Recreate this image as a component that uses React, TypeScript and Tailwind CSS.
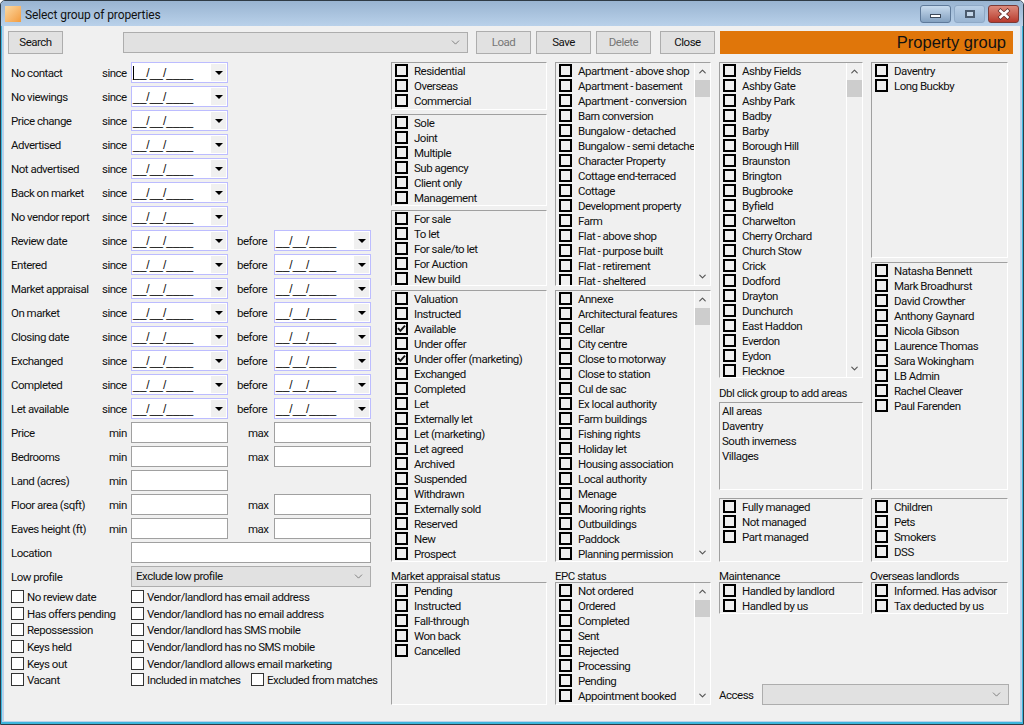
import { ReactNode } from 'react';
import { ChevronDown, ChevronUp } from 'lucide-react';

const dateRows = [
  { label: 'No contact', caret: true },
  { label: 'No viewings' },
  { label: 'Price change' },
  { label: 'Advertised' },
  { label: 'Not advertised' },
  { label: 'Back on market' },
  { label: 'No vendor report' },
  { label: 'Review date', before: true },
  { label: 'Entered', before: true },
  { label: 'Market appraisal', before: true },
  { label: 'On market', before: true },
  { label: 'Closing date', before: true },
  { label: 'Exchanged', before: true },
  { label: 'Completed', before: true },
  { label: 'Let available', before: true },
];

const rangeRows = [
  { label: 'Price', max: true },
  { label: 'Bedrooms', max: true },
  { label: 'Land (acres)', max: false },
  { label: 'Floor area (sqft)', max: true },
  { label: 'Eaves height (ft)', max: true },
];

const flagRows = [
  { h: 'h-[17px]', left: 'No review date', right: 'Vendor/landlord has email address' },
  { h: 'h-[16px]', left: 'Has offers pending', right: 'Vendor/landlord has no email address' },
  { h: 'h-[17px]', left: 'Repossession', right: 'Vendor/landlord has SMS mobile' },
  { h: 'h-[17px]', left: 'Keys held', right: 'Vendor/landlord has no SMS mobile' },
  { h: 'h-[16px]', left: 'Keys out', right: 'Vendor/landlord allows email marketing' },
  { h: 'h-[17px]', left: 'Vacant', right: 'Included in matches', extra: 'Excluded from matches' },
];

const statusList = ['Valuation', 'Instructed', 'Available', 'Under offer', 'Under offer (marketing)', 'Exchanged', 'Completed', 'Let', 'Externally let', 'Let (marketing)', 'Let agreed', 'Archived', 'Suspended', 'Withdrawn', 'Externally sold', 'Reserved', 'New', 'Prospect'];
const typeList = ['Apartment - above shop', 'Apartment - basement', 'Apartment - conversion', 'Barn conversion', 'Bungalow - detached', 'Bungalow - semi detached', 'Character Property', 'Cottage end-terraced', 'Cottage', 'Development property', 'Farm', 'Flat - above shop', 'Flat - purpose built', 'Flat - retirement', 'Flat - sheltered'];
const featureList = ['Annexe', 'Architectural features', 'Cellar', 'City centre', 'Close to motorway', 'Close to station', 'Cul de sac', 'Ex local authority', 'Farm buildings', 'Fishing rights', 'Holiday let', 'Housing association', 'Local authority', 'Menage', 'Mooring rights', 'Outbuildings', 'Paddock', 'Planning permission'];
const epcList = ['Not ordered', 'Ordered', 'Completed', 'Sent', 'Rejected', 'Processing', 'Pending', 'Appointment booked', ''];
const areaList = ['Ashby Fields', 'Ashby Gate', 'Ashby Park', 'Badby', 'Barby', 'Borough Hill', 'Braunston', 'Brington', 'Bugbrooke', 'Byfield', 'Charwelton', 'Cherry Orchard', 'Church Stow', 'Crick', 'Dodford', 'Drayton', 'Dunchurch', 'East Haddon', 'Everdon', 'Eydon', 'Flecknoe'];
const staffList = ['Natasha Bennett', 'Mark Broadhurst', 'David Crowther', 'Anthony Gaynard', 'Nicola Gibson', 'Laurence Thomas', 'Sara Wokingham', 'LB Admin', 'Rachel Cleaver', 'Paul Farenden'];

function Arrow() {
  return <span className="h-0 w-0 border-x-[4px] border-t-[4px] border-x-transparent border-t-black" />;
}

function DateField({ caret }: { caret?: boolean }) {
  return (
    <div className="flex h-[21px] w-[97px] items-center justify-between border border-[#bcbcff] bg-white px-[1px]">
      <span className="flex items-center font-['Liberation_Sans',sans-serif] text-[12px] leading-none tracking-normal text-[#111]">
        {caret && <span className="-mr-[1px] h-[14px] w-[1px] bg-black" />}
        __/__/____
      </span>
      <span className="flex h-[17px] w-[15px] items-center justify-center bg-[#f0f0f0]">
        <Arrow />
      </span>
    </div>
  );
}

function TextBox({ wide }: { wide?: boolean }) {
  return <div className={`h-[21px] border border-[#a0a0a0] bg-white ${wide ? 'w-[240px]' : 'w-[97px]'}`} />;
}

function Combo({ value, className }: { value?: string; className: string }) {
  return (
    <div className={`flex shrink-0 items-center justify-between border border-[#adadad] bg-[#e1e1e1] pl-1 pr-[5px] ${className}`}>
      <span className="mt-[1px]">{value}</span>
      <ChevronDown size={13} strokeWidth={1.25} className="text-[#555]" />
    </div>
  );
}

function Button({ children, disabled, className }: { children: ReactNode; disabled?: boolean; className: string }) {
  return (
    <div className={`flex h-[23px] w-[55px] items-center justify-center border border-[#adadad] bg-[#e1e1e1] ${disabled ? 'text-[#777]' : ''} ${className}`}>
      {children}
    </div>
  );
}

function Tick({ label, checked }: { label: string; checked?: boolean }) {
  return (
    <div className="flex h-[15px] items-center whitespace-nowrap">
      <span className="mr-[6px] flex h-[13px] w-[13px] shrink-0 items-center justify-center border-2 border-black bg-[#f0f0f0]">
        {checked && (
          <svg width="9" height="9" viewBox="0 0 9 9" fill="none">
            <path d="M1 4.2 L3.4 6.8 L8 1.6" stroke="#111" strokeWidth="1.9" />
          </svg>
        )}
      </span>
      <span className="mt-[2px] leading-none">{label}</span>
    </div>
  );
}

function ThinTick({ label, className }: { label: string; className?: string }) {
  return (
    <div className={`flex items-center whitespace-nowrap ${className ?? ''}`}>
      <span className="mr-[3px] h-[13px] w-[13px] shrink-0 border border-[#333] bg-white" />
      <span className="mt-[2px] leading-none">{label}</span>
    </div>
  );
}

function Scrollbar() {
  return (
    <div className="flex w-[16px] shrink-0 flex-col items-center border-l border-white">
      <div className="flex h-[17px] items-center justify-center">
        <ChevronUp size={11} strokeWidth={2.5} className="text-[#555]" />
      </div>
      <div className="h-[17px] w-full bg-[#cdcdcd]" />
      <div className="flex-1" />
      <div className="flex h-[17px] items-center justify-center">
        <ChevronDown size={11} strokeWidth={2.5} className="text-[#555]" />
      </div>
    </div>
  );
}

function Box({ className, children, scroll }: { className: string; children: ReactNode; scroll?: boolean }) {
  return (
    <div className={`flex overflow-hidden border border-b-white border-l-[#a0a0a0] border-r-white border-t-[#a0a0a0] ${className}`}>
      <div className="min-w-0 flex-1 overflow-hidden pl-[3px]">{children}</div>
      {scroll && <Scrollbar />}
    </div>
  );
}

function Ticks({ items, checked = [] }: { items: string[]; checked?: string[] }) {
  return (
    <>
      {items.map((item) => (
        <Tick key={item} label={item} checked={checked.includes(item)} />
      ))}
    </>
  );
}

function Caption({ children, className }: { children: ReactNode; className?: string }) {
  return <div className={`flex items-end whitespace-nowrap leading-none ${className ?? 'h-[20px]'}`}>{children}</div>;
}

export default function App() {
  return (
    <div className="flex h-[725px] w-[1024px] flex-col overflow-hidden rounded-t-[5px] border border-[#2f3b45] bg-[#b9d1ea] font-['Roboto',sans-serif] text-[11.5px] tracking-[-0.5px] text-[#111]">
      {/* title bar */}
      <div className="flex h-[25px] shrink-0 items-center bg-gradient-to-b from-[#99b4d1] to-[#b9d1ea] pl-[4px] pr-[4px]">
        <div className="mr-[4px] mt-[1px] h-[16px] w-[16px] bg-gradient-to-br from-[#fbd9a0] to-[#f29b3a]" />
        <span className="mt-[2px] text-[12px] tracking-[-0.1px]">Select group of properties</span>
        <div className="ml-auto flex gap-[3px] self-start pt-[4px]">
          <div className="flex h-[18px] w-[31px] items-center justify-center rounded-[3px] border border-[#5f7a9a] bg-gradient-to-b from-[#c8dbee] to-[#84a1c0]">
            <span className="mt-[3px] h-[4px] w-[11px] border border-[#3d4a5a] bg-white" />
          </div>
          <div className="flex h-[18px] w-[31px] items-center justify-center rounded-[3px] border border-[#8fa9c6] bg-gradient-to-b from-[#b9cfe6] to-[#9ab5d2]">
            <span className="h-[8px] w-[10px] border-2 border-[#4b5a6c] bg-[#c4d6e8]" />
          </div>
          <div className="flex h-[18px] w-[31px] items-center justify-center rounded-[3px] border border-[#7c3a36] bg-gradient-to-b from-[#dc8a7c] to-[#b8392c]">
            <svg width="16" height="12" viewBox="0 0 16 12" fill="none">
              <path d="M3 1.5 L13 10.5 M13 1.5 L3 10.5" stroke="#5a2a28" strokeWidth="4" />
              <path d="M3.5 2 L12.5 10 M12.5 2 L3.5 10" stroke="#fff" strokeWidth="2.6" />
            </svg>
          </div>
        </div>
      </div>

      {/* frame round the client area */}
      <div className="flex min-h-0 flex-1 flex-col border-x border-b-2 border-[#3cb6dd] px-[2px] pb-[1px]">
        <div className="min-h-0 flex-1 overflow-hidden bg-[#f0f0f0] pl-[4px]">
          {/* toolbar */}
          <div className="flex h-[28px] items-end">
            <Button className="mr-[60px]">Search</Button>
            <Combo className="mb-[1px] mr-[8px] h-[21px] w-[345px]" />
            <Button disabled className="mr-[5px]">Load</Button>
            <Button className="mr-[5px]">Save</Button>
            <Button disabled className="mr-[9px]">Delete</Button>
            <Button className="mr-[5px]">Close</Button>
            <div className="flex h-[23px] w-[293px] items-center justify-end bg-[#e0760a] pr-[7px] font-['Liberation_Sans',sans-serif] text-[16.5px] leading-none tracking-normal">Property group</div>
          </div>

          <div className="mt-[8px] flex">
            {/* filter form */}
            <div className="ml-[3px] w-[380px] shrink-0">
              {dateRows.map((row) => (
                <div key={row.label} className="flex h-[24px] items-start">
                  <span className="mt-[6px] w-[91px] leading-none">{row.label}</span>
                  <span className="mt-[6px] w-[29px] leading-none">since</span>
                  <DateField caret={row.caret} />
                  {row.before && (
                    <>
                      <span className="ml-[9px] mt-[6px] w-[37px] leading-none">before</span>
                      <DateField />
                    </>
                  )}
                </div>
              ))}
              {rangeRows.map((row) => (
                <div key={row.label} className="flex h-[24px] items-start">
                  <span className="mt-[6px] w-[98px] leading-none">{row.label}</span>
                  <span className="mt-[6px] w-[22px] leading-none">min</span>
                  <TextBox />
                  {row.max && (
                    <>
                      <span className="ml-[20px] mt-[6px] w-[26px] leading-none">max</span>
                      <TextBox />
                    </>
                  )}
                </div>
              ))}
              <div className="flex h-[24px] items-start">
                <span className="mt-[6px] w-[120px] leading-none">Location</span>
                <TextBox wide />
              </div>
              <div className="flex h-[24px] items-start">
                <span className="mt-[6px] w-[120px] leading-none">Low profile</span>
                <Combo value="Exclude low profile" className="h-[21px] w-[240px]" />
              </div>
              {flagRows.map((row) => (
                <div key={row.left} className={`flex ${row.h} items-start`}>
                  <ThinTick label={row.left} className="w-[120px]" />
                  <ThinTick label={row.right} className={row.extra ? 'w-[120px]' : ''} />
                  {row.extra && <ThinTick label={row.extra} />}
                </div>
              ))}
            </div>

            {/* category lists */}
            <div className="flex w-[156px] shrink-0 flex-col">
              <Box className="h-[48px]"><Ticks items={['Residential', 'Overseas', 'Commercial']} /></Box>
              <Box className="mt-[4px] h-[92px]"><Ticks items={['Sole', 'Joint', 'Multiple', 'Sub agency', 'Client only', 'Management']} /></Box>
              <Box className="mt-[4px] h-[76px]"><Ticks items={['For sale', 'To let', 'For sale/to let', 'For Auction', 'New build']} /></Box>
              <Box className="mt-[4px] h-[272px]"><Ticks items={statusList} checked={['Available', 'Under offer (marketing)']} /></Box>
              <Caption>Market appraisal status</Caption>
              <Box className="h-[123px]"><Ticks items={['Pending', 'Instructed', 'Fall-through', 'Won back', 'Cancelled']} /></Box>
            </div>

            <div className="ml-[8px] flex w-[156px] shrink-0 flex-col">
              <Box scroll className="h-[224px]"><Ticks items={typeList} /></Box>
              <Box scroll className="mt-[4px] h-[272px]"><Ticks items={featureList} /></Box>
              <Caption>EPC status</Caption>
              <Box scroll className="h-[123px]"><Ticks items={epcList} /></Box>
            </div>

            <div className="ml-[8px] flex w-[144px] shrink-0 flex-col">
              <Box scroll className="h-[316px]"><Ticks items={areaList} /></Box>
              <Caption className="h-[24px] pb-[3px]">Dbl click group to add areas</Caption>
              <Box className="h-[88px]">
                {['All areas', 'Daventry', 'South inverness', 'Villages'].map((area) => (
                  <div key={area} className="-ml-[1px] flex h-[15px] items-center pt-[2px] leading-none">{area}</div>
                ))}
              </Box>
              <Box className="mt-[8px] h-[64px]"><Ticks items={['Fully managed', 'Not managed', 'Part managed']} /></Box>
              <Caption>Maintenance</Caption>
              <Box className="h-[32px]"><Ticks items={['Handled by landlord', 'Handled by us']} /></Box>
              <div className="mt-[70px] flex w-[290px] items-center">
                <span className="mt-[2px] w-[43px] leading-none">Access</span>
                <Combo className="h-[21px] w-[247px]" />
              </div>
            </div>

            <div className="ml-[8px] flex w-[137px] shrink-0 flex-col">
              <Box className="h-[196px]"><Ticks items={['Daventry', 'Long Buckby']} /></Box>
              <Box className="mt-[4px] h-[228px]"><Ticks items={staffList} /></Box>
              <Box className="mt-[8px] h-[64px]"><Ticks items={['Children', 'Pets', 'Smokers', 'DSS']} /></Box>
              <Caption className="-ml-[1px] h-[20px]">Overseas landlords</Caption>
              <Box className="h-[32px]"><Ticks items={['Informed. Has advisor', 'Tax deducted by us']} /></Box>
            </div>
          </div>
        </div>
      </div>
    </div>
  );
}
